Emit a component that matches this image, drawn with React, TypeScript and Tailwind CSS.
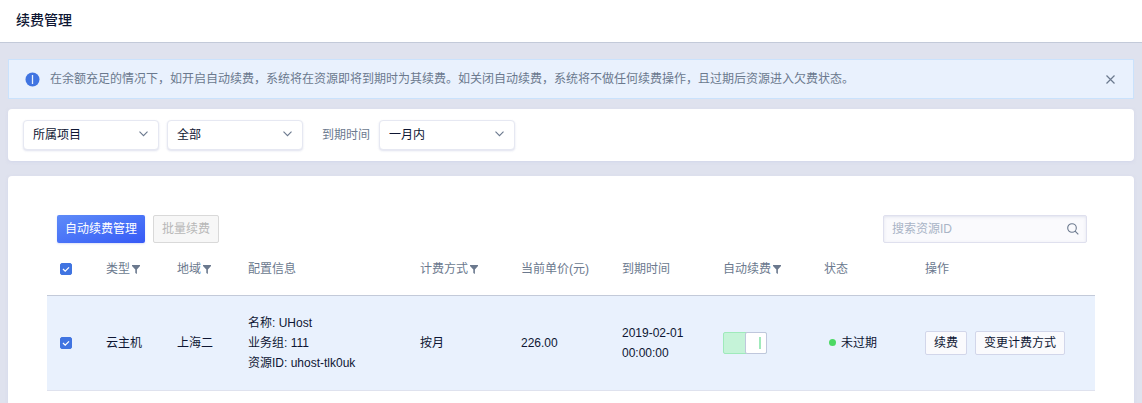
import { useState } from 'react';
import type { ReactNode } from 'react';

const columns = [
    { key: 'type', label: '类型', filter: true },
    { key: 'region', label: '地域', filter: true },
    { key: 'config', label: '配置信息' },
    { key: 'charge', label: '计费方式', filter: true },
    { key: 'price', label: '当前单价(元)' },
    { key: 'expire', label: '到期时间' },
    { key: 'auto', label: '自动续费', filter: true },
    { key: 'status', label: '状态' },
    { key: 'actions', label: '操作' },
];

const resources = [
    {
        id: 'uhost-tlk0uk',
        type: '云主机',
        region: '上海二',
        name: 'UHost',
        group: '111',
        charge: '按月',
        price: '226.00',
        date: '2019-02-01',
        time: '00:00:00',
        status: '未过期',
    },
];

function FunnelIcon() {
    return (
        <svg width="8" height="10" viewBox="0 0 8 10" fill="currentColor" aria-hidden="true">
            <path d="M0 1h8v0.9L4.9 5.4V10L3.3 9V5.4L0 1.9z" />
        </svg>
    );
}

function Select({ label, options }: { label: string; options: string[] }) {
    return (
        <div className="relative">
            <select
                aria-label={label}
                className="block h-[30px] w-[136px] appearance-none rounded-sm border border-[#e6e8f2] bg-white pl-[9px] pr-7 text-[#0e1633] shadow-[0_1px_2px_rgba(150,155,200,0.3)] outline-none"
            >
                {options.map((option) => (
                    <option key={option}>{option}</option>
                ))}
            </select>
            <svg
                className="pointer-events-none absolute right-[11px] top-[11px] text-[#6b798e]"
                width="9"
                height="6"
                viewBox="0 0 9 6"
                fill="none"
                stroke="currentColor"
                strokeWidth="1.1"
                aria-hidden="true"
            >
                <path d="M0.5 0.7l4 4 4-4" />
            </svg>
        </div>
    );
}

function Checkbox({ label, checked, onChange }: { label: string; checked: boolean; onChange: () => void }) {
    return (
        <span className="relative block size-3">
            <input
                type="checkbox"
                aria-label={label}
                checked={checked}
                onChange={onChange}
                className="block size-3 appearance-none rounded-xs border border-[#c3cad9] bg-white checked:border-[#4074e1] checked:bg-[#4074e1]"
            />
            {checked && (
                <svg
                    className="pointer-events-none absolute inset-0"
                    width="12"
                    height="12"
                    viewBox="0 0 12 12"
                    fill="none"
                    stroke="#fff"
                    strokeWidth="1.3"
                    aria-hidden="true"
                >
                    <path d="M3 6l2.2 2.1L9 4.4" />
                </svg>
            )}
        </span>
    );
}

function ActionButton({ children }: { children: ReactNode }) {
    return (
        <button
            type="button"
            className="h-6 rounded-xs border border-[#d2d6ea] bg-[#fafafd] px-2 whitespace-nowrap hover:bg-white"
        >
            {children}
        </button>
    );
}

export default function App() {
    const [noticeOpen, setNoticeOpen] = useState(true);
    const [selected, setSelected] = useState<string[]>(resources.map((r) => r.id));
    const [autoRenew, setAutoRenew] = useState(true);

    const allSelected = selected.length === resources.length;

    const toggleRow = (id: string) => {
        setSelected(selected.includes(id) ? selected.filter((s) => s !== id) : [...selected, id]);
    };

    return (
        <div className="flex min-h-screen flex-col bg-[#dfe2ee] font-['Liberation_Sans','Noto_Sans_CJK_SC',sans-serif] text-xs leading-5 text-[#0e1633]">
            <header className="border-b border-[#c3cad9] bg-white px-4 pt-[9px] pb-[13px]">
                <h1 className="font-['Noto_Sans_CJK_SC',sans-serif] text-sm leading-5 font-medium">续费管理</h1>
            </header>

            <main className="flex flex-1 flex-col px-2 pt-4">
                {noticeOpen && (
                    <div className="mb-[10px] flex items-center border border-[#cae2fc] bg-[#e9f1fd] py-[9px] pr-[18px] pl-4 text-[#6b798e]">
                        <svg className="mr-[10px] shrink-0" width="15" height="15" viewBox="0 0 15 15" aria-hidden="true">
                            <circle cx="7.5" cy="7.5" r="7" fill="#4074e1" />
                            <path d="M7.5 3v9" stroke="#e9f1fd" strokeWidth="1.3" />
                        </svg>
                        <p className="flex-1">
                            在余额充足的情况下，如开启自动续费，系统将在资源即将到期时为其续费。如关闭自动续费，系统将不做任何续费操作，且过期后资源进入欠费状态。
                        </p>
                        <button type="button" aria-label="关闭" onClick={() => setNoticeOpen(false)}>
                            <svg width="9" height="9" viewBox="0 0 9 9" fill="none" stroke="currentColor" strokeWidth="1.2">
                                <path d="M0.5 0.5l8 8M8.5 0.5l-8 8" />
                            </svg>
                        </button>
                    </div>
                )}

                <section className="mb-[15px] flex items-center rounded bg-white px-[15px] py-[11px] shadow-[0_1px_3px_rgba(200,203,232,0.5)]">
                    <Select label="所属项目" options={['所属项目']} />
                    <div className="ml-2">
                        <Select label="资源类型" options={['全部', '云主机']} />
                    </div>
                    <span className="mr-[9px] ml-[19px] text-[#6b798e]">到期时间</span>
                    <Select label="到期时间" options={['一月内', '三月内']} />
                </section>

                <section className="flex-1 rounded-t bg-white px-[39px] pt-[39px] shadow-[0_1px_3px_rgba(200,203,232,0.5)]">
                    <div className="flex items-center gap-2 pr-2 pl-[10px]">
                        <button
                            type="button"
                            className="h-7 rounded-xs bg-linear-to-br from-[#5f8bf8] to-[#3759f6] px-2 text-white shadow-[0_1px_2px_rgba(80,100,220,0.2)]"
                        >
                            自动续费管理
                        </button>
                        <button
                            type="button"
                            disabled
                            className="h-7 rounded-xs border border-[#d9d9d9] bg-[#f7f7f7] px-2 text-[#b8b8b8]"
                        >
                            批量续费
                        </button>
                        <div className="relative ml-auto">
                            <input
                                type="text"
                                aria-label="搜索资源ID"
                                placeholder="搜索资源ID"
                                className="block h-7 w-[204px] rounded-xs border border-[#dfe0ee] bg-[#fafafd] pr-7 pl-2 shadow-[inset_0_1px_3px_rgba(200,203,225,0.5)] outline-none placeholder:text-[#a9b4c6]"
                            />
                            <svg
                                className="pointer-events-none absolute top-2 right-2 text-[#6b798e]"
                                width="12"
                                height="12"
                                viewBox="0 0 12 12"
                                fill="none"
                                stroke="currentColor"
                                strokeWidth="1.1"
                                aria-hidden="true"
                            >
                                <circle cx="5" cy="5" r="4.3" />
                                <path d="M8.1 8.1l3.2 3.2" />
                            </svg>
                        </div>
                    </div>

                    <table className="w-full table-fixed border-collapse text-left">
                        <colgroup>
                            <col className="w-[49px]" />
                            <col className="w-[71px]" />
                            <col className="w-[71px]" />
                            <col className="w-[172px]" />
                            <col className="w-[101px]" />
                            <col className="w-[101px]" />
                            <col className="w-[101px]" />
                            <col className="w-[101px]" />
                            <col className="w-[101px]" />
                            <col className="w-[180px]" />
                        </colgroup>
                        <thead className="text-[#6b798e]">
                            <tr className="h-[52px] border-b border-[#c3cad9]">
                                <th className="pl-[13px]">
                                    <Checkbox
                                        label="全选"
                                        checked={allSelected}
                                        onChange={() => setSelected(allSelected ? [] : resources.map((r) => r.id))}
                                    />
                                </th>
                                {columns.map((col) => (
                                    <th key={col.key} className="px-[10px] font-normal whitespace-nowrap">
                                        {col.filter ? (
                                            <button type="button" className="flex items-center gap-0.5">
                                                {col.label}
                                                <FunnelIcon />
                                            </button>
                                        ) : (
                                            col.label
                                        )}
                                    </th>
                                ))}
                            </tr>
                        </thead>
                        <tbody>
                            {resources.map((item) => (
                                <tr
                                    key={item.id}
                                    className={`h-[95px] border-b border-[#dfe2ee] ${selected.includes(item.id) ? 'bg-[#e9f1fd]' : ''}`}
                                >
                                    <td className="pl-[13px]">
                                        <Checkbox
                                            label={item.id}
                                            checked={selected.includes(item.id)}
                                            onChange={() => toggleRow(item.id)}
                                        />
                                    </td>
                                    <td className="px-[10px]">{item.type}</td>
                                    <td className="px-[10px]">{item.region}</td>
                                    <td className="px-[10px]">
                                        <p>名称: {item.name}</p>
                                        <p>业务组: {item.group}</p>
                                        <p>资源ID: {item.id}</p>
                                    </td>
                                    <td className="px-[10px]">{item.charge}</td>
                                    <td className="px-[10px]">{item.price}</td>
                                    <td className="px-[10px]">
                                        {item.date}
                                        <br />
                                        {item.time}
                                    </td>
                                    <td className="px-[10px]">
                                        <button
                                            type="button"
                                            role="switch"
                                            aria-label="自动续费"
                                            aria-checked={autoRenew}
                                            onClick={() => setAutoRenew(!autoRenew)}
                                            className={`flex h-[22px] w-11 items-center rounded-xs border ${autoRenew ? 'justify-end border-[#9feabb] bg-[#c5f3d8]' : 'border-[#c3cad9] bg-[#eceef5]'}`}
                                        >
                                            <span className="-m-px flex h-[22px] w-[22px] items-center justify-end rounded-xs border border-[#bfc7dc] bg-white pr-[5px]">
                                                <span className={`h-3 w-0.5 ${autoRenew ? 'bg-[#9feabb]' : 'bg-[#c3cad9]'}`} />
                                            </span>
                                        </button>
                                    </td>
                                    <td className="px-[10px]">
                                        <span className="flex items-center gap-[5px] pl-[5px]">
                                            <span className="size-[7px] rounded-full bg-[#4cd964]" />
                                            {item.status}
                                        </span>
                                    </td>
                                    <td className="px-[10px]">
                                        <div className="flex gap-2">
                                            <ActionButton>续费</ActionButton>
                                            <ActionButton>变更计费方式</ActionButton>
                                        </div>
                                    </td>
                                </tr>
                            ))}
                        </tbody>
                    </table>
                </section>
            </main>
        </div>
    );
}
